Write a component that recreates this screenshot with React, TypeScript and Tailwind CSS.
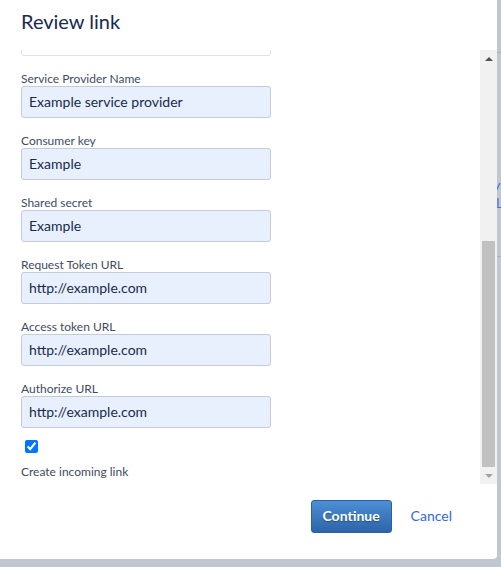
import React from "react";

const font = { fontFamily: "Lato, 'Liberation Sans', sans-serif" };

type Field = { label: string; value: string };

const fields: Field[] = [
  { label: "Service Provider Name", value: "Example service provider" },
  { label: "Consumer key", value: "Example" },
  { label: "Shared secret", value: "Example" },
  { label: "Request Token URL", value: "http://example.com" },
  { label: "Access token URL", value: "http://example.com" },
  { label: "Authorize URL", value: "http://example.com" },
];

function FormField({ label, value }: Field) {
  return (
    <div className="flex flex-col mb-[14px]">
      <label className="h-4 text-[12px] leading-[18px] text-[#3e4b63]">{label}</label>
      <input
        readOnly
        value={value}
        className="h-8 w-[250px] rounded-[3px] border border-[#c3cbdc] bg-[#e8f0fe] px-[7px] pb-[2px] text-[14px] text-[#172b4d] outline-none"
        style={font}
      />
    </div>
  );
}

function Scrollbar() {
  return (
    <div className="w-[17px] h-full bg-[#f1f1f1] flex flex-col items-center">
      <div className="h-[17px] w-full flex items-center justify-center">
        <div className="w-0 h-0 border-l-[4px] border-r-[4px] border-b-[4px] border-l-transparent border-r-transparent border-b-[#505050]" />
      </div>
      <div className="flex-1 w-full px-[2px] flex flex-col">
        <div className="flex-1" />
        <div className="h-[226px] w-full bg-[#c1c1c1]" />
      </div>
      <div className="h-[17px] w-full flex items-center justify-center">
        <div className="w-0 h-0 border-l-[4px] border-r-[4px] border-t-[4px] border-l-transparent border-r-transparent border-t-[#a3a3a3]" />
      </div>
    </div>
  );
}

export default function App() {
  return (
    <div className="w-[501px] h-[567px] bg-[#c1c7d0] flex overflow-hidden" style={font}>
      <div className="w-[497px] h-[559px] bg-white rounded-br-[4px] flex flex-col shrink-0">
        {/* header */}
        <div className="h-[50px] px-[21px] pt-[9px]">
          <h2 className="text-[20px] leading-6 text-[#172b4d]">Review link</h2>
        </div>

        {/* scrolling body */}
        <div className="h-[434px] flex">
          <div className="flex-1 overflow-hidden px-[21px]">
            <div className="-mt-[26px]">
              <div className="mb-[14px]">
                <input
                  readOnly
                  className="h-8 w-[250px] rounded-[3px] border border-[#dfe1e6] bg-white"
                />
              </div>
              {fields.map((f) => (
                <FormField key={f.label} {...f} />
              ))}
              <div className="-mt-[2px] h-[13px]">
                <input
                  type="checkbox"
                  defaultChecked
                  className="ml-[4px] w-[13px] h-[13px] align-top"
                />
              </div>
              <div className="mt-[10px] text-[12px] leading-[18px] text-[#3e4b63]">
                Create incoming link
              </div>
            </div>
          </div>
          <Scrollbar />
        </div>

        {/* footer */}
        <div className="flex justify-end items-start pt-4 pr-[45px]">
          <button
            className="h-[33px] w-[81px] rounded-[3px] border border-[#2c609f] bg-gradient-to-b from-[#4d8fd6] to-[#2c64a8] pb-[2px] text-[14px] font-bold text-white [text-shadow:0_1px_1px_rgba(0,0,0,0.35)]"
            style={font}
          >
            Continue
          </button>
          <button className="ml-[19px] h-[33px] pb-[2px] text-[14px] text-[#3367e6]" style={font}>
            Cancel
          </button>
        </div>
      </div>

      {/* blanketed page behind the dialog */}
      <div className="w-[4px] h-full overflow-hidden flex flex-col">
        <div className="mt-[52px] h-px w-full bg-[#a9b1c1]" />
        <div className="mt-[124px] text-[13px] leading-4 italic text-[#3d5bd9] -ml-[3px]">y</div>
        <div className="mt-[2px] text-[13px] leading-4 text-[#4a6ee0] -ml-[1px]">L</div>
        <div className="mt-[45px] h-px w-full bg-[#a9b1c1]" />
      </div>
    </div>
  );
}
